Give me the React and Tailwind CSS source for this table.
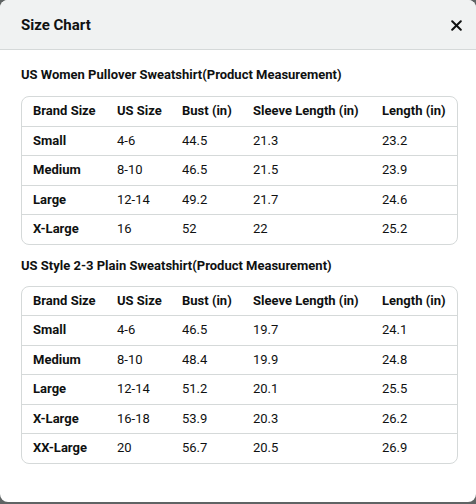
import React from "react";

const womenRows = [
  ["Small", "4-6", "44.5", "21.3", "23.2"],
  ["Medium", "8-10", "46.5", "21.5", "23.9"],
  ["Large", "12-14", "49.2", "21.7", "24.6"],
  ["X-Large", "16", "52", "22", "25.2"],
];

const plainRows = [
  ["Small", "4-6", "46.5", "19.7", "24.1"],
  ["Medium", "8-10", "48.4", "19.9", "24.8"],
  ["Large", "12-14", "51.2", "20.1", "25.5"],
  ["X-Large", "16-18", "53.9", "20.3", "26.2"],
  ["XX-Large", "20", "56.7", "20.5", "26.9"],
];

// bảng kích thước
const SizeTable = ({ rows }) => (
  <div className="w-[437px] border border-[#d5d9d9] rounded-lg overflow-hidden">
    <table className="w-full table-fixed border-collapse text-[13px] leading-[20.5px] text-[#0f1111]">
      <thead>
        <tr className="border-b border-[#d5d9d9]">
          <th className="w-[84px] pl-[11px] py-1 text-left font-bold">Brand Size</th>
          <th className="w-[65px] pl-[11px] py-1 text-left font-bold">US Size</th>
          <th className="w-[71px] pl-[11px] py-1 text-left font-bold">Bust (in)</th>
          <th className="w-[129px] pl-[11px] py-1 text-left font-bold">Sleeve Length (in)</th>
          <th className="pl-[11px] py-1 text-left font-bold">Length (in)</th>
        </tr>
      </thead>
      <tbody>
        {rows.map((row, index) => (
          <tr
            key={index}
            className={index < rows.length - 1 ? "border-b border-[#d5d9d9]" : ""}
          >
            {row.map((cell, i) => (
              <td
                key={i}
                className={"pl-[11px] py-1 " + (i === 0 ? "font-bold" : "font-normal")}
              >
                {cell}
              </td>
            ))}
          </tr>
        ))}
      </tbody>
    </table>
  </div>
);

const App = () => {
  return (
    <div className="h-[504px] w-[476px] bg-[#5f6464] font-['Roboto',sans-serif] text-[#0f1111]">
      <div className="h-[502px] bg-white rounded-lg overflow-hidden">
        {/* Tiêu đề */}
        <div className="h-[50px] bg-[#f0f2f2] border-b border-[#d5d9d9] flex items-center justify-between pl-[21px] pr-[8px]">
          <h1 className="text-[15px] font-bold leading-6">Size Chart</h1>
          <button className="w-6 h-6 mt-[2px] flex items-center justify-center">
            <svg width="11" height="11" viewBox="0 0 11 11">
              <path d="M1.2 1.2 L9.8 9.8 M9.8 1.2 L1.2 9.8" stroke="#0f1111" strokeWidth="2" strokeLinecap="round" />
            </svg>
          </button>
        </div>

        <div className="px-[21px]">
          <h2 className="mt-[15px] mb-[11px] text-[13px] leading-5 font-bold">
            US Women Pullover Sweatshirt(Product Measurement)
          </h2>
          <SizeTable rows={womenRows} />

          <h2 className="mt-[11px] mb-[10px] text-[13px] leading-5 font-bold">
            US Style 2-3 Plain Sweatshirt(Product Measurement)
          </h2>
          <SizeTable rows={plainRows} />
        </div>
      </div>
    </div>
  );
};

export default App;
